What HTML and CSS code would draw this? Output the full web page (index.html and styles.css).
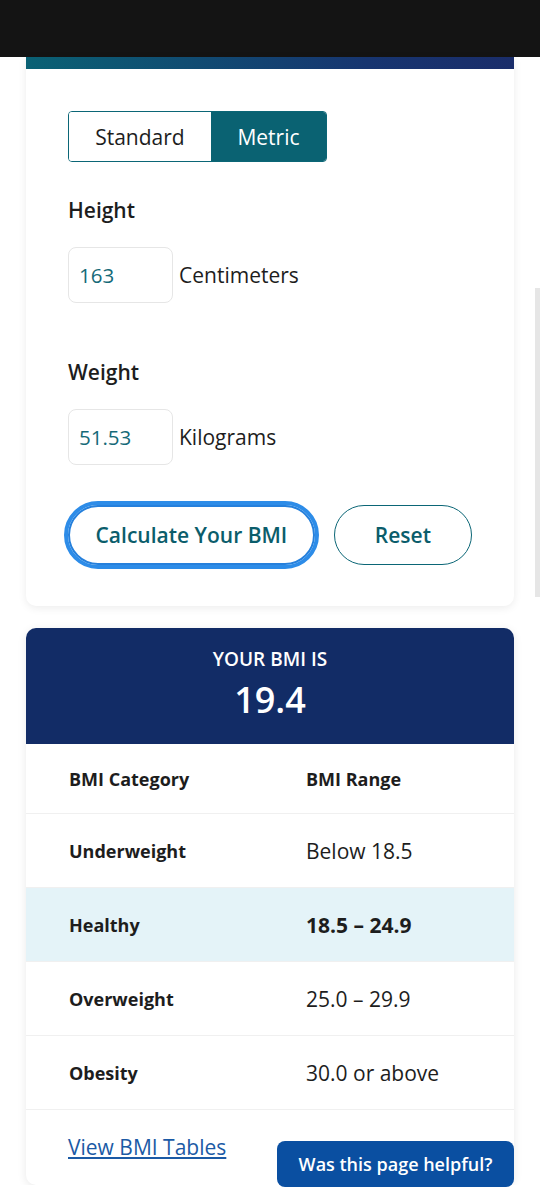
FILE: index.html
```html
<!DOCTYPE html>
<html lang="en">
<head>
    <meta charset="UTF-8">
    <meta name="viewport" content="width=device-width, initial-scale=1.0">
    <title>BMI Calculator</title>
    <link rel="stylesheet" href="styles.css">
</head>
<body>
    <div class="topbar"></div>

    <div class="card calc">
        <div class="accent"></div>
        <div class="calc-body">
            <div class="toggle">
                <button class="toggle-btn">Standard</button>
                <button class="toggle-btn active">Metric</button>
            </div>

            <div class="field">
                <label class="field-label">Height</label>
                <div class="field-row">
                    <input class="num" type="text" value="163">
                    <span class="unit">Centimeters</span>
                </div>
            </div>

            <div class="field">
                <label class="field-label">Weight</label>
                <div class="field-row">
                    <input class="num" type="text" value="51.53">
                    <span class="unit">Kilograms</span>
                </div>
            </div>

            <div class="actions">
                <button class="pill focused">Calculate Your BMI</button>
                <button class="pill">Reset</button>
            </div>
        </div>
    </div>

    <div class="card result">
        <div class="result-head">
            <div class="result-label">YOUR BMI IS</div>
            <div class="result-value">19.4</div>
        </div>
        <table class="bmi-table">
            <tr class="head-row">
                <th>BMI Category</th>
                <th>BMI Range</th>
            </tr>
            <tr>
                <td class="cat">Underweight</td>
                <td>Below 18.5</td>
            </tr>
            <tr class="current">
                <td class="cat">Healthy</td>
                <td>18.5 – 24.9</td>
            </tr>
            <tr>
                <td class="cat">Overweight</td>
                <td>25.0 – 29.9</td>
            </tr>
            <tr>
                <td class="cat">Obesity</td>
                <td>30.0 or above</td>
            </tr>
        </table>
        <div class="result-foot">
            <a href="#" class="tables-link">View BMI Tables</a>
        </div>
    </div>

    <button class="helpful">Was this page helpful?</button>
    <div class="scroll-thumb"></div>
</body>
</html>
```

FILE: styles.css
```css
body {
    font-family: "Open Sans", "Noto Sans", sans-serif;
    margin: 0;
    padding: 0;
    background-color: #fff;
    color: #1d1d1d;
}
.topbar {
    height: 57px;
    background-color: #141414;
}
.card {
    margin: 0 26px;
    background-color: #fff;
    border-radius: 0 0 10px 10px;
    box-shadow: 0 2px 8px rgba(0,0,0,0.08);
}
.accent {
    height: 12px;
    background: linear-gradient(90deg, #0a6174 0%, #173570 70%, #1a2d6a 100%);
}
.calc-body {
    padding: 42px 42px 41px 42px;
}
.toggle {
    display: flex;
    width: 259px;
    height: 51px;
    box-sizing: border-box;
    border: 1px solid #0b6676;
    border-radius: 4px;
    overflow: hidden;
}
.toggle-btn {
    font-family: inherit;
    font-size: 21px;
    border: none;
    background: #fff;
    color: #1d1d1d;
    padding: 0;
    width: 143px;
}
.toggle-btn.active {
    width: 116px;
    background-color: #0a6272;
    color: #fff;
}
.field {
    margin-top: 34px;
}
.field + .field {
    margin-top: 55px;
}
.field-label {
    display: block;
    font-size: 21px;
    font-weight: 600;
    line-height: 28px;
    color: #1d1d1d;
}
.field-row {
    display: flex;
    align-items: center;
    margin-top: 23px;
}
.num {
    width: 105px;
    height: 56px;
    box-sizing: border-box;
    border: 1px solid #e6e6e6;
    border-radius: 8px;
    padding: 0 10px;
    font-family: inherit;
    font-size: 20.5px;
    color: #166a78;
}
.unit {
    margin-left: 6px;
    font-size: 21px;
}
.actions {
    display: flex;
    align-items: center;
    gap: 19px;
    margin-top: 40px;
}
.pill {
    height: 60px;
    padding: 0 40px;
    border: 1px solid #0b6676;
    border-radius: 30px;
    background: #fff;
    font-family: inherit;
    font-size: 21px;
    font-weight: 600;
    color: #0b5d6b;
}
.pill.focused {
    width: 248px;
    padding: 0;
    border: 2px solid #2680dc;
    outline: 4px solid #2d8ce8;
}
.result {
    margin-top: 22px;
    border-radius: 10px;
    overflow: hidden;
    box-shadow: 0 2px 10px rgba(0,0,0,0.09);
}
.result-head {
    background-color: #122c66;
    color: #fff;
    text-align: center;
    padding: 19px 0 21px 0;
}
.result-label {
    font-size: 19px;
    font-weight: 600;
    line-height: 24px;
}
.result-value {
    margin-top: 6px;
    font-size: 36px;
    font-weight: 600;
    line-height: 46px;
}
.bmi-table {
    width: 100%;
    border-collapse: collapse;
}
.bmi-table th, .bmi-table td {
    height: 73px;
    padding: 0;
    text-align: left;
    border-bottom: 1px solid #f0f0f0;
}
.bmi-table th:first-child, .bmi-table td:first-child {
    width: 237px;
    padding-left: 43px;
}
.bmi-table th {
    font-size: 18px;
    font-weight: 700;
    height: 69px;
}
.bmi-table td {
    font-size: 21px;
    color: #1d1d1d;
}
.bmi-table td.cat {
    font-size: 18px;
    font-weight: 700;
}
.current td {
    background-color: #e4f3f8;
}
.current td:last-child {
    font-weight: 700;
}
.result-foot {
    padding: 23px 42px 22px 42px;
    line-height: 28px;
}
.tables-link {
    font-size: 21px;
    color: #1b5aa5;
}
.helpful {
    position: fixed;
    left: 277px;
    top: 1141px;
    width: 237px;
    height: 46px;
    border: none;
    border-radius: 8px;
    background-color: #0a4fa1;
    color: #fff;
    font-family: inherit;
    font-size: 18px;
    font-weight: 600;
}
.scroll-thumb {
    position: fixed;
    right: 0;
    top: 288px;
    width: 5px;
    height: 309px;
    background-color: #e6e6e6;
}
```
